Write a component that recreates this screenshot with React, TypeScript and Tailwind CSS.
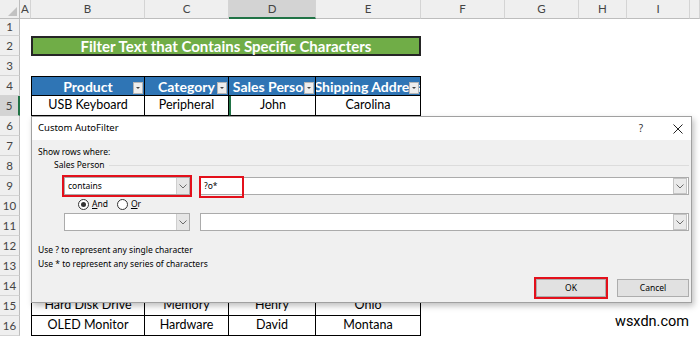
import React from 'react';

const COLS = ['A', 'B', 'C', 'D', 'E', 'F', 'G', 'H', 'I', ''];

const headers = ['Product', 'Category', 'Sales Person', 'Shipping Address'];

const tableRows: Record<number, string[]> = {
  5: ['USB Keyboard', 'Peripheral', 'John', 'Carolina'],
  15: ['Hard Disk Drive', 'Memory', 'Henry', 'Ohio'],
  16: ['OLED Monitor', 'Hardware', 'David', 'Montana'],
};

const FilterButton = () => (
  <div className="absolute right-[1px] bottom-[1px] w-[10px] h-[12px] bg-[#EEEEEE] border border-[#B5B5B5] flex items-center justify-center">
    <svg width="6" height="4" viewBox="0 0 6 4">
      <path d="M1 1 L5 1 L3 3 Z" fill="#444" />
    </svg>
  </div>
);

const Chevron = () => (
  <svg width="8" height="5" viewBox="0 0 8 5">
    <path d="M0.5 0.5 L4 4 L7.5 0.5" fill="none" stroke="#6b6b6b" strokeWidth="1" />
  </svg>
);

const ComboBox = ({ value }: { value: string }) => (
  <div className="w-[126px] h-[18px] bg-white border border-[#ABABAB] flex items-center">
    <span className="flex-1 pl-[3px] text-[8.5px] text-black">{value}</span>
    <div className="w-[13px] h-full bg-[#E6E6E6] border-l border-[#CFCFCF] flex items-center justify-center">
      <Chevron />
    </div>
  </div>
);

const TextBox = ({ value, marked }: { value: string; marked?: boolean }) => (
  <div className="relative flex-1 h-[18px] bg-white border border-[#ABABAB] flex items-center">
    <span className="flex-1 pl-[3px] text-[8.5px] text-black">{value}</span>
    <div className="w-[14px] h-[16px] mr-[1px] bg-[#EAEAEA] border border-[#C4C4C4] flex items-center justify-center">
      <Chevron />
    </div>
    {marked && (
      <div className="absolute left-[-2px] top-[-2px] w-[45px] h-[22px] border-2 border-[#E3101B]" />
    )}
  </div>
);

const Radio = ({ checked, label }: { checked?: boolean; label: string }) => (
  <div className="flex items-center gap-[3px]">
    <div className="w-[11px] h-[11px] rounded-full border border-[#333] bg-white flex items-center justify-center">
      {checked && <div className="w-[5px] h-[5px] rounded-full bg-[#333]" />}
    </div>
    <span className="text-[8.5px] text-black">
      <span className="underline">{label[0]}</span>
      {label.slice(1)}
    </span>
  </div>
);

const AutoFilterDialog = () => (
  <div
    className="absolute left-[31px] top-[116px] w-[661px] h-[187px] flex flex-col bg-[#F0F0F0] border border-[#A0A0A0] shadow-[2px_3px_6px_rgba(0,0,0,0.25)]"
    style={{ fontFamily: '"Noto Sans", "Open Sans", sans-serif' }}
  >
    <div className="h-[23px] bg-white flex items-center pl-[6px] pr-[8px]">
      <span className="flex-1 text-[9.5px] text-black">Custom AutoFilter</span>
      <span className="text-[10px] text-[#333] mr-[30px]">?</span>
      <svg width="10" height="10" viewBox="0 0 10 10">
        <path d="M0.5 0.5 L9.5 9.5 M9.5 0.5 L0.5 9.5" stroke="#222" strokeWidth="1" />
      </svg>
    </div>
    <div className="flex-1 flex flex-col pr-[2px]">
      <div className="h-[12px] mt-[6px] pl-[6px] flex items-center text-[8.5px] text-black">Show rows where:</div>
      <div className="h-[12px] mt-[1px] pl-[22px] flex items-center gap-[4px]">
        <span className="text-[8.5px] text-black">Sales Person</span>
        <div className="flex-1 border-t border-[#DCDCDC]" />
      </div>
      <div className="flex items-center mt-[4px] pl-[30px]">
        <div className="border-2 border-[#E3101B]">
          <ComboBox value="contains" />
        </div>
        <div className="flex-1 flex ml-[8px]">
          <TextBox value="?o*" marked />
        </div>
      </div>
      <div className="h-[14px] flex items-center gap-[9px] pl-[46px]">
        <Radio checked label="And" />
        <Radio label="Or" />
      </div>
      <div className="flex items-center mt-[2px] pl-[32px]">
        <ComboBox value="" />
        <div className="flex-1 flex ml-[10px]">
          <TextBox value="" />
        </div>
      </div>
      <div className="h-[12px] mt-[13px] pl-[6px] flex items-center text-[8.5px] text-black">
        Use ? to represent any single character
      </div>
      <div className="h-[12px] mt-[2px] pl-[6px] flex items-center text-[8.5px] text-black">
        Use * to represent any series of characters
      </div>
      <div className="flex items-center justify-end mt-[7px]">
        <div className="border-2 border-[#E3101B]">
          <div className="w-[70px] h-[18px] bg-[#E1E1E1] border border-[#ADADAD] flex items-center justify-center text-[8.5px] text-black">
            OK
          </div>
        </div>
        <div className="w-[72px] h-[18px] ml-[9px] bg-[#E1E1E1] border border-[#ADADAD] flex items-center justify-center text-[8.5px] text-black">
          Cancel
        </div>
      </div>
    </div>
  </div>
);

const SheetCell = ({ row, col }: { row: number; col: number }) => {
  // col: 0 = A ... 9 = J
  if (row === 2) {
    if (col === 1) {
      return (
        <div className="col-span-4 bg-[#70AD47] border-2 border-[#262626] flex items-center justify-center">
          <span className="text-white font-bold text-[15px] whitespace-nowrap">
            Filter Text that Contains Specific Characters
          </span>
        </div>
      );
    }
    if (col >= 2 && col <= 4) return null;
  }
  const inTable = row >= 4 && col >= 1 && col <= 4;
  if (!inTable) return <div />;
  const idx = col - 1;
  const left = col === 1 ? 'border-l' : '';
  if (row === 4) {
    return (
      <div className={`relative overflow-hidden bg-[#2F75B5] border-t border-r border-b border-black ${left} flex items-center justify-center`}>
        <span className="whitespace-nowrap text-white font-bold text-[14px]">{headers[idx]}</span>
        <FilterButton />
      </div>
    );
  }
  const data = tableRows[row];
  const selected = row === 5 && col === 3;
  return (
    <div
      className={`overflow-hidden bg-white border-r border-b border-black ${left} ${selected ? 'border-l-2 border-l-[#217346]' : ''} flex items-center justify-center`}
    >
      <span className="whitespace-nowrap text-black text-[12.5px]">{data ? data[idx] : ''}</span>
    </div>
  );
};

export default function App() {
  const rows = Array.from({ length: 16 }, (_, i) => i + 1);
  return (
    <div className="relative w-[700px] h-[337px] overflow-hidden bg-white" style={{ fontFamily: 'Lato, "Open Sans", sans-serif' }}>
      <div className="grid grid-cols-[20px_11px_114px_84px_87px_105px_84px_74px_48px_63px_1fr] grid-rows-[19px_17px_repeat(15,20px)]">
        {/* column letters */}
        <div className="bg-[#EFEFEF] border-r border-b border-[#BDBDBD] flex items-end justify-end p-[2px]">
          <svg width="9" height="9" viewBox="0 0 9 9">
            <path d="M9 0 L9 9 L0 9 Z" fill="#C2C2C2" />
          </svg>
        </div>
        {COLS.map((c) => (
          <div
            key={c || 'J'}
            className={`flex items-center justify-center text-[11.5px] text-[#444] border-r border-[#D4D4D4] ${
              c === 'D' ? 'bg-[#D3D3D3] border-b-2 border-b-[#217346]' : 'bg-[#EFEFEF] border-b border-b-[#BDBDBD]'
            }`}
          >
            {c}
          </div>
        ))}
        {rows.map((r) => (
          <React.Fragment key={r}>
            <div
              className={`flex items-center justify-center text-[11.5px] text-[#444] border-b border-[#D4D4D4] ${
                r === 5 ? 'bg-[#D3D3D3] border-r-2 border-r-[#217346]' : 'bg-[#EFEFEF] border-r border-r-[#BDBDBD]'
              }`}
            >
              {r}
            </div>
            {COLS.map((_, ci) => (
              <SheetCell key={ci} row={r} col={ci} />
            ))}
          </React.Fragment>
        ))}
      </div>
      <AutoFilterDialog />
      <div className="absolute right-[11px] bottom-[4px] text-[14.5px] text-black" style={{ fontFamily: 'Roboto, sans-serif' }}>
        wsxdn.com
      </div>
    </div>
  );
}
